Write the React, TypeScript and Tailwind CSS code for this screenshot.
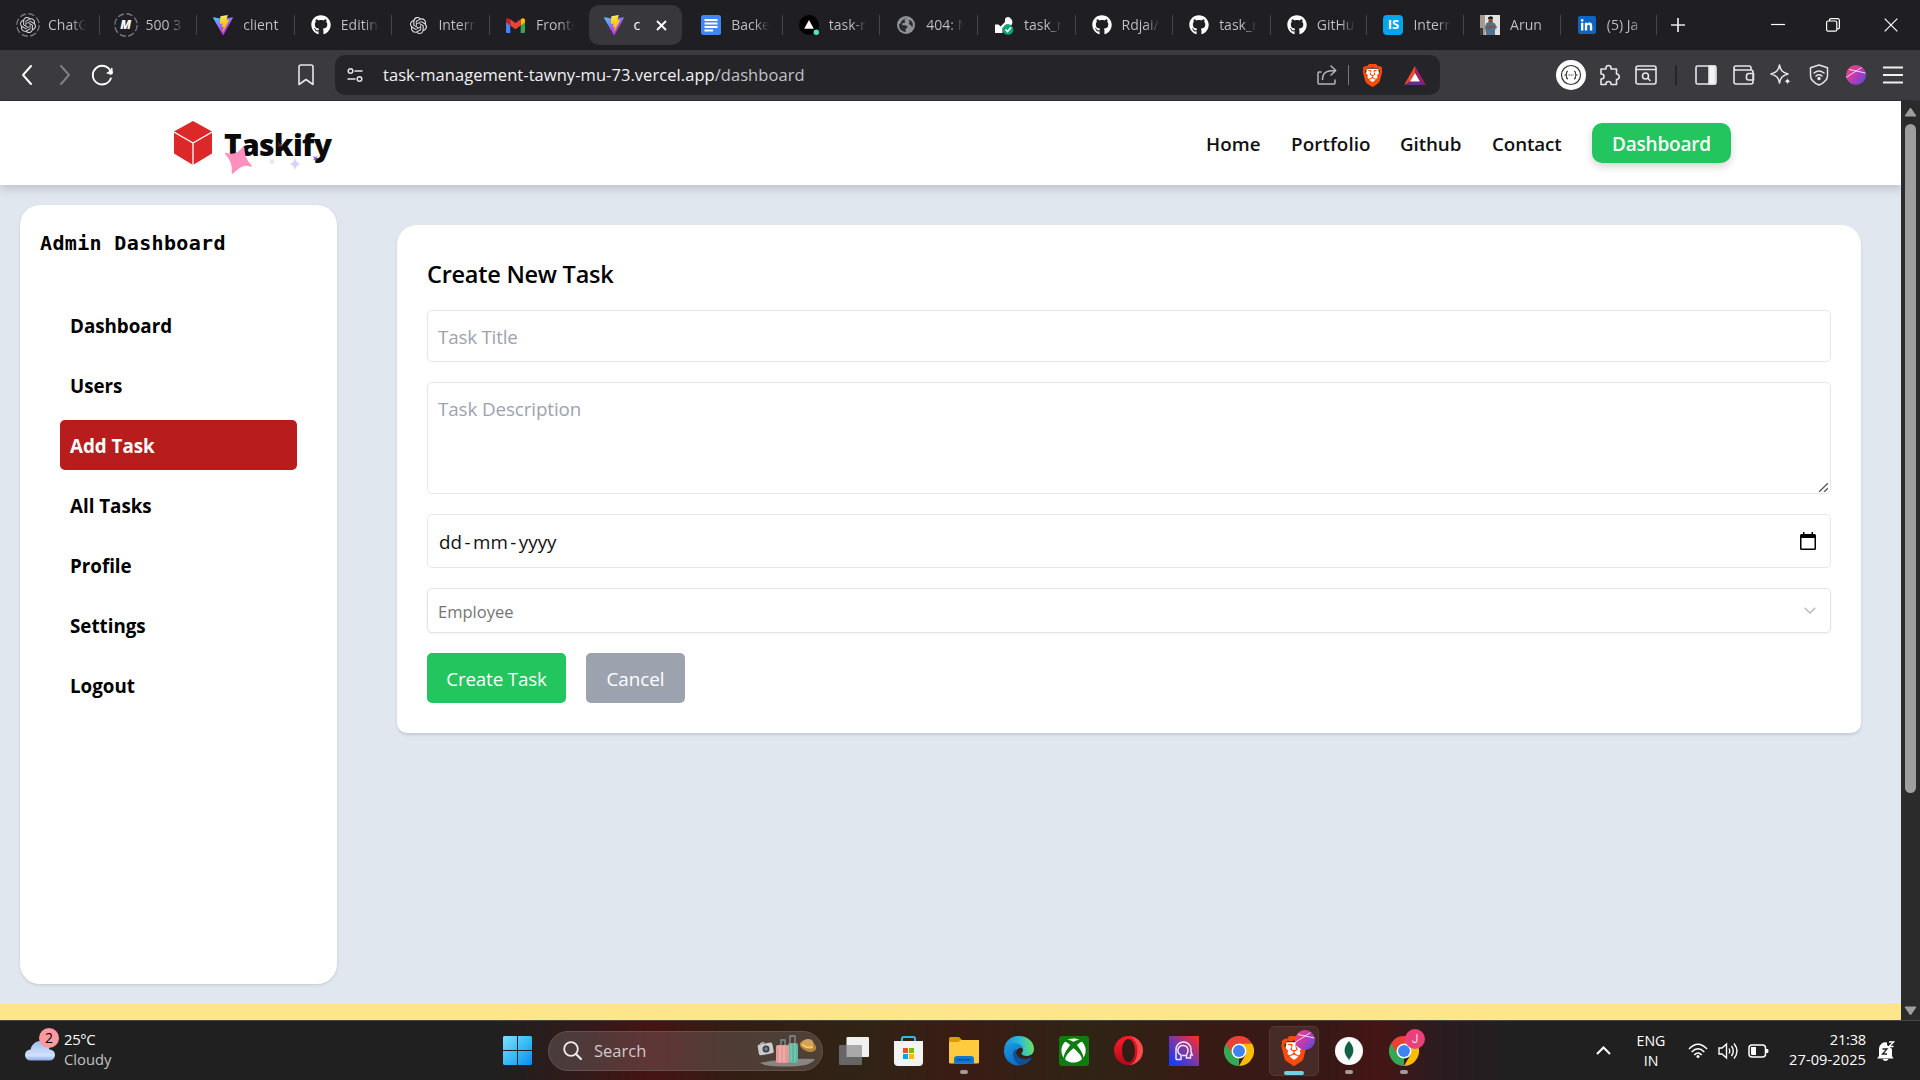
import React from "react";
import { FaGithub, FaXbox, FaLinkedinIn } from "react-icons/fa";
import { SiOpenai, SiBrave } from "react-icons/si";

function Vite() {
  return (
    <svg width="20" height="20" viewBox="0 0 256 257">
      <defs>
        <linearGradient id="va" x1="0" x2=".55" y1="0" y2=".8"><stop offset="0" stopColor="#41D1FF" /><stop offset="1" stopColor="#BD34FE" /></linearGradient>
        <linearGradient id="vb" x1=".4" x2=".5" y1="0" y2="1"><stop offset="0" stopColor="#FFEA83" /><stop offset=".2" stopColor="#FFDD35" /><stop offset="1" stopColor="#FFA800" /></linearGradient>
      </defs>
      <path fill="url(#va)" d="M255.153 37.938L134.897 252.976c-2.483 4.44-8.862 4.466-11.382.048L.875 37.958c-2.746-4.814 1.371-10.646 6.827-9.67l120.385 21.517a6.537 6.537 0 0 0 2.322-.004l117.867-21.483c5.438-.991 9.574 4.796 6.877 9.62Z" />
      <path fill="url(#vb)" d="M185.432.063L96.44 17.501a3.268 3.268 0 0 0-2.634 3.014l-5.474 92.456a3.268 3.268 0 0 0 3.997 3.378l24.777-5.718c2.318-.535 4.413 1.507 3.936 3.838l-7.361 36.047c-.495 2.426 1.782 4.5 4.151 3.78l15.304-4.649c2.372-.72 4.652 1.36 4.15 3.788l-11.698 56.621c-.732 3.542 3.979 5.473 5.943 2.437l1.313-2.028l72.516-144.72c1.215-2.423-.88-5.186-3.54-4.672l-25.505 4.922c-2.396.462-4.435-1.77-3.759-4.114l16.646-57.705c.677-2.35-1.37-4.583-3.769-4.113Z" />
    </svg>
  );
}

const Github = () => <FaGithub size={20} color="#fff" />;

function Sleeping({ children }: { children: React.ReactNode }) {
  return (
    <div className="relative flex h-6 w-6 items-center justify-center">
      <svg className="absolute inset-0" width="24" height="24" viewBox="0 0 24 24" fill="none">
        <circle cx="12" cy="12" r="11.2" stroke="#77767c" strokeWidth="1.4" strokeDasharray="6.4 2.4" />
      </svg>
      {children}
    </div>
  );
}

function Gmail() {
  return (
    <svg width="19" height="15" viewBox="0 0 19 15">
      <path fill="#4285f4" d="M0 2h4.3v13H1.3A1.3 1.3 0 0 1 0 13.700z" />
      <path fill="#34a853" d="M14.700 2H19v11.700A1.300 1.300 0 0 1 17.700 15h-3z" />
      <path fill="#fbbc04" d="M14.700 1.200 16.500.3Q19 0 19 2v2.200l-4.300 3.200z" />
      <path fill="#c5221f" d="M0 2Q0 0 2.300.3l2 .9v6.200L0 4.200z" />
      <path fill="#ea4335" d="M4.300 7.400V1.200L9.500 5.100l5.200-3.900v6.200L9.500 11.300z" />
    </svg>
  );
}

function Docs() {
  return (
    <svg width="20" height="20" viewBox="0 0 20 20"><rect width="20" height="20" rx="2.500" fill="#4285f4" /><path stroke="#fff" strokeWidth="2" d="M3.500 5h13M3.500 8.500h13M3.500 12h13M3.500 15.500h8.500" /></svg>
  );
}

function Vercel() {
  return (
    <svg width="20" height="20" viewBox="0 0 20 20"><circle cx="10" cy="10" r="10" fill="#000" /><path fill="#fff" d="m10 5 4.800 8.700H5.200z" /><circle cx="17.300" cy="17.300" r="2.700" fill="#50e3c2" /></svg>
  );
}

function Globe() {
  return (
    <svg width="18" height="18" viewBox="0 0 18 18"><circle cx="9" cy="9" r="9" fill="#8f9297" /><path fill="#2b2a2f" d="M10.500 2.300c-1 .3-2.700.6-3 1.800-.2 1 1.200 1.200.6 2.200-.7 1-2.600.4-3 1.600-.3.900.8 1.300 2.300 1.300 1.700.1 3.200.4 3.100 1.900-.1 1.200-1.800 1.300-2 2.500-.1.900.6 2 .3 2.400C4.600 15.700 2 12.600 2 9c0-.7.100-1 .2-1.500C3.500 8 4 7.300 4 6.500c0-1 .8-2 2-2.800C7.500 2.800 9 2 10.500 2.300zM11.500 4c1.300-.3 2.700.6 3.500 1.800.8 1.300 1.200 3.700.6 5-.7.200-1.300-.4-1.500-1.200-.3-1-1.600-.7-2-1.700-.5-1.300.8-1.600.4-2.400-.3-.6-1.600-.7-1-1.500z" /></svg>
  );
}

function Tool() {
  return (
    <svg width="20" height="20" viewBox="0 0 20 20">
      <path fill="#fff" d="M1 9.500h3.500l2 2L11 7V4a3.200 3.200 0 0 1 6 0c1.500 1 2 4 .5 6L12 9.500 8.500 13v5H1z" />
      <circle cx="14" cy="14.500" r="5.300" fill="#0ca678" />
      <path d="m11.500 14.500 2 2 3.500-4" stroke="#fff" strokeWidth="1.600" fill="none" />
    </svg>
  );
}

function Photo() {
  return (
    <svg width="20" height="20" viewBox="0 0 20 20">
      <path fill="#e4e2de" d="M0 0h20v20H0z" /><path fill="#a39b90" d="M0 0h5v20H0z" /><path fill="#3e3a36" d="M0 13h3v7H0z" />
      <path fill="#54718e" d="M6 8.500Q10 5 15 8.500l2 4-2 2v5.500H6l-1-8z" /><path fill="#7a5340" d="M8.500 2.500h4.200v4.500q-2 2-4.200 0zM6 12l8-1.500 1 1.500-8 2z" /><path fill="#191716" d="M8 2.800Q10.300-.2 13 2.500v1.200H8z" />
    </svg>
  );
}

const tabs: { label: string; icon: React.ReactNode; active?: boolean }[] = [
  { label: "ChatG", icon: <Sleeping><SiOpenai size={16} color="#d6d6d8" /></Sleeping> },
  { label: "500 3", icon: <Sleeping><span className="text-[12px] font-extrabold italic text-white">M</span></Sleeping> },
  { label: "client", icon: <Vite /> },
  { label: "Editin", icon: <Github /> },
  { label: "Intern", icon: <SiOpenai size={17} color="#e4e4e6" /> },
  { label: "Fronte", icon: <Gmail /> },
  { label: "c", icon: <Vite />, active: true },
  { label: "Backe", icon: <Docs /> },
  { label: "task-r", icon: <Vercel /> },
  { label: "404: N", icon: <Globe /> },
  { label: "task_r", icon: <Tool /> },
  { label: "Rdjai/", icon: <Github /> },
  { label: "task_r", icon: <Github /> },
  { label: "GitHu", icon: <Github /> },
  { label: "Intern", icon: <span className="flex h-5 w-5 items-center justify-center rounded-[4px] bg-[#00a5ec] text-[13px] font-bold text-white">IS</span> },
  { label: "Arun", icon: <Photo /> },
  { label: "(5) Ja", icon: <span className="flex h-[18px] w-[18px] items-center justify-center rounded-[2px] bg-[#0a66c2]"><FaLinkedinIn size={13} color="#fff" /></span> },
];

function TabStrip() {
  return (
    <div className="flex h-[50px] items-center bg-[#1f1e23] pl-[2px]">
      {tabs.map((t, i) => (
        <div key={i} className={"flex h-10 shrink-0 items-center " + (i >= 13 ? "w-[96.7px]" : "w-[97.6px]")}>
          <div className={"flex h-10 items-center " + (t.active ? "ml-px w-[93px] rounded-[10px] bg-[#38373c]" : "flex-1")}>
            <div className={"flex w-6 justify-center " + (t.active ? "ml-[13px]" : "ml-[14px]")}>{t.icon}</div>
            {t.active ? (
              <>
                <span className="ml-[8px] pb-[2px] text-[14px] text-white">c</span>
                <svg className="ml-[16px]" width="11" height="11" viewBox="0 0 11 11"><path d="m1 1 9 9m0-9-9 9" stroke="#fff" strokeWidth="1.900" /></svg>
              </>
            ) : (
              <div className={"ml-[8px] w-[38px] whitespace-nowrap bg-clip-text pb-[2px] text-[14px] text-transparent " + (t.label === "client" || t.label === "Arun" ? "bg-[#c3c3c6]" : "bg-[linear-gradient(90deg,#c3c3c6_62%,#1f1e23_100%)]")}>{t.label}</div>
            )}
          </div>
          <div className={"h-5 w-px " + (t.active || i === 5 ? "bg-transparent" : "bg-[#47464b]")} />
        </div>
      ))}
      <svg className="ml-[14px]" width="14" height="14" viewBox="0 0 14 14"><path d="M7 0v14M0 7h14" stroke="#e8e8ea" strokeWidth="1.700" /></svg>
      <div className="ml-auto flex h-full items-center">
        <svg className="mr-[41px]" width="14" height="14" viewBox="0 0 14 14"><path d="M0 6.500h14" stroke="#fff" strokeWidth="1.200" /></svg>
        <svg className="mr-[44px]" width="14" height="14" viewBox="0 0 14 14" fill="none" stroke="#fff" strokeWidth="1.200"><rect x=".6" y="3" width="10.200" height="10.200" rx="1.500" /><path d="M3.500 3V2A1.400 1.400 0 0 1 5 .7h6.500A1.900 1.900 0 0 1 13.400 2.500V9.500a1.400 1.400 0 0 1-1.400 1.400h-1" /></svg>
        <svg className="mr-[22px]" width="14" height="14" viewBox="0 0 14 14"><path d="m.7.7 12.600 12.600m0-12.600L.7 13.300" stroke="#fff" strokeWidth="1.200" /></svg>
      </div>
    </div>
  );
}

const lineIcon = { fill: "none", stroke: "#e6e6e8", strokeWidth: 1.6, strokeLinejoin: "round", strokeLinecap: "round" } as const;

function Cell({ w, children }: { w: number; children: React.ReactNode }) {
  return <div className="flex shrink-0 items-center justify-center" style={{ width: w }}>{children}</div>;
}

function Orb({ size }: { size: number }) {
  return (
    <svg width={size} height={size} viewBox="0 0 20 20">
      <defs><linearGradient id="orb" x1="0" x2="1" y1=".2" y2="1"><stop offset="0" stopColor="#f0427a" /><stop offset=".5" stopColor="#b53bb8" /><stop offset="1" stopColor="#4b4fe0" /></linearGradient></defs>
      <circle cx="10" cy="10" r="10" fill="url(#orb)" />
      <path d="M3 4.500 19.500 8M0 12.500 15.500 2.500" stroke="#f5d8f4" strokeWidth="1" />
    </svg>
  );
}

function BraveLion({ size }: { size: number }) {
  return (
    <svg width={size} height={size} viewBox="0 0 24 24">
      <path fill="#fff" d="M6 5h12l1 6-3 7-4 3-4-3-3-7z" />
      <SiBrave size={24} color="#ff4a0c" />
    </svg>
  );
}

function Toolbar() {
  return (
    <div className="flex h-[51px] items-center border-b border-[#2f2e36] bg-[#3b3a3f]">
      <div className="flex w-[335px] shrink-0 items-center pl-[21px]">
        <svg width="12" height="20" viewBox="0 0 12 20" {...lineIcon} stroke="#fff" strokeWidth="1.900"><path d="M10 1 2 10l8 9" /></svg>
        <svg className="ml-[26px]" width="12" height="20" viewBox="0 0 12 20" {...lineIcon} stroke="#818086" strokeWidth="1.900"><path d="m2 1 8 9-8 9" /></svg>
        <svg className="ml-[20px]" width="24" height="22" viewBox="0 0 24 22" {...lineIcon} stroke="#fff" strokeWidth="1.900"><path d="M19.800 14.500A9.300 9.300 0 1 1 19.500 7" /><circle cx="19.600" cy="8.500" r="2.300" fill="#fff" stroke="none" /><path d="M20.800 4.500v4.500h-4.500" strokeWidth="1.500" /></svg>
        <svg className="ml-auto mr-[21px]" width="16" height="22" viewBox="0 0 16 22" {...lineIcon}><path d="M1 3a2 2 0 0 1 2-2h10a2 2 0 0 1 2 2v17.500L8 15.500l-7 5z" /></svg>
      </div>
      <div className="flex h-10 w-[1105px] shrink-0 items-center rounded-[10px] bg-[#252429]">
        <svg className="ml-[12px]" width="16" height="16" viewBox="0 0 16 16" {...lineIcon} strokeWidth="1.500"><circle cx="3.500" cy="4" r="2.300" /><path d="M8 4h7M1 12h7" /><circle cx="12.500" cy="12" r="2.300" /></svg>
        <div className="ml-[20px] text-[16.500px] leading-6 tracking-[0.06px] text-[#f2f2f3]"><span>task-management-tawny-mu-73.vercel.app</span><span className="text-[#c2c2c6]">/dashboard</span></div>
        <div className="ml-auto flex items-center pr-[6px]">
          <svg className="mr-[11px]" width="20" height="20" viewBox="0 0 20 20" {...lineIcon} stroke="#b5b5ba" strokeWidth="1.500"><path d="M4 7H2a1 1 0 0 0-1 1v10a1 1 0 0 0 1 1h15a1 1 0 0 0 1-1v-3M5.500 14.500C5.500 8 9 5.500 18 5.500M14 1l4.800 4.500L14 10" /></svg>
          <div className="h-5 w-px bg-[#7a797f]" />
          <Cell w={47}><BraveLion size={23} /></Cell>
          <Cell w={38}><svg width="22" height="19" viewBox="0 0 22 19"><path fill="#ff4724" d="M11 0v7L6 15.500 0 19z" /><path fill="#9e1f63" d="M11 0v7l5.500 8.500L22 19z" /><path fill="#662d91" d="m0 19 6-3.500h10.500L22 19z" /><path fill="#fff" d="m11 7 5 8.500H6z" /></svg></Cell>
        </div>
      </div>
      <div className="ml-auto flex items-center pr-[8px]">
        <Cell w={40}><div className="flex h-[30px] w-[30px] items-center justify-center rounded-full bg-white"><svg width="22" height="22" viewBox="0 0 22 22" fill="none" stroke="#333" strokeWidth="1.200"><circle cx="11" cy="11" r="9.500" /><path d="M8 7q-1.500.2-1.400 1.800.2 1.800-1 2.200 1.200.4 1 2.200-.1 1.600 1.400 1.800M14 7q1.500.2 1.400 1.800-.2 1.800 1 2.200-1.200.4-1 2.200.1 1.600-1.400 1.800" /><path d="M8.500 11h5" strokeDasharray="1.200 .8" /></svg></div></Cell>
        <Cell w={37}><svg width="22" height="22" viewBox="0 0 22 22" {...lineIcon}><path d="M2 5h5V4a2.500 2.500 0 0 1 5 0v1h5.500v5H18a2.800 2.800 0 0 1 0 5.500h-.5V20.500H12V20a2.500 2.500 0 0 0-5 0v.5H2V15h.5a2.300 2.300 0 0 0 0-5H2z" /></svg></Cell>
        <Cell w={36}><svg width="22" height="20" viewBox="0 0 22 20" {...lineIcon}><rect x="1" y="1" width="20" height="18" rx="2" /><path d="M1 4.500h20" /><circle cx="10.500" cy="11" r="3" /><path d="m12.800 13.300 2.200 2.200" /></svg></Cell>
        <Cell w={23}><div className="h-5 w-[2px] bg-[#252429]" /></Cell>
        <Cell w={38}><svg width="22" height="20" viewBox="0 0 22 20" {...lineIcon}><rect x="1" y="1" width="20" height="18" rx="1.500" /><path d="M14 1h6v18h-6z" fill="#f4f4f5" /></svg></Cell>
        <Cell w={37}><svg width="22" height="20" viewBox="0 0 22 20" {...lineIcon}><path d="M18 5V3a2 2 0 0 0-2-2H3a2 2 0 0 0 0 4h15a2 2 0 0 1 2 2v10a2 2 0 0 1-2 2H3a2 2 0 0 1-2-2V3M20.500 8.500H16a2.500 2.500 0 0 0-2.500 2.500v2a2 2 0 0 0 2 2h5z" /></svg></Cell>
        <Cell w={38}><svg width="22" height="22" viewBox="0 0 22 22" {...lineIcon} strokeWidth="1.500"><path d="M9.500 1c1 5.500 3 7.500 8.500 9-5.500 1.500-7.500 3.500-8.500 9-1-5.500-3-7.500-8.500-9 5.500-1.500 7.500-3.500 8.500-9z" /><path d="M17.500 13.500c.5 2.500 1 3 3.500 3.800-2.500.7-3 1.200-3.500 3.700-.5-2.500-1-3-3.500-3.700 2.500-.8 3-1.300 3.500-3.800z" fill="#fff" stroke="#3b3a3f" strokeWidth=".5" /></svg></Cell>
        <Cell w={37}><svg width="20" height="22" viewBox="0 0 20 22" {...lineIcon} strokeWidth="1.500"><path d="m10 1 8.500 2.700v7.800q0 6-8.500 9.500-8.500-3.500-8.500-9.500V3.700zM5 9q5-4 10 0M7 12q3-2.500 6 0" /><circle cx="10" cy="14.500" r="1" fill="#fff" /></svg></Cell>
        <Cell w={37}><Orb size={20} /></Cell>
        <Cell w={38}><svg width="20" height="18" viewBox="0 0 20 18"><path d="M0 1.500h20M0 9h20M0 16.500h20" stroke="#f0f0f1" strokeWidth="1.800" /></svg></Cell>
      </div>
    </div>
  );
}

function Header() {
  return (
    <header className="relative z-10 flex h-[84px] shrink-0 items-center bg-white pl-[174px] shadow-[0_4px_9px_rgba(60,65,80,0.22)]">
      <svg className="-mt-px" width="38" height="44" viewBox="0 0 38 44"><path fill="#dc2828" d="M19 0 38 10.500v22L19 44 0 32.500v-22z" /><path d="M0 11 19 22l19-11M19 22v22" stroke="#fff" strokeWidth="1.300" fill="none" /></svg>
      <div className="relative ml-[12px]">
        <span className="block pt-[3px] text-[30px] font-extrabold leading-10 tracking-[-0.7px] text-[#0a0a0a]">Taskify</span>
        <svg className="absolute left-0 top-0" width="112" height="54" viewBox="0 0 112 54">
          <path fill="#ff8fbd" d="M19.500 25.500C20.300 33 20.500 37 27 44C20 41.500 15.500 44 8.500 51C9.500 43.500 7.500 38 1.700 31.500C9 33.500 14 32.500 19.500 25.500z" stroke="#ff8fbd" strokeWidth="1.500" strokeLinejoin="round" />
          <path fill="#d9d0fd" d="M71 36q1 4.800 5.500 6-4.500 1.200-5.500 6-1-4.800-5.500-6 4.500-1.200 5.500-6z" />
          <path fill="#e6defd" d="m45.500 36.500 2.500 1.500 2.500-1.500-1 2.700 1 2.800-2.500-1-2.500 1 1-2.800z" />
          <path fill="#6b4fd8" opacity=".75" d="m89 34 2.300 1 2.300-1-1 2.300 1 2.300-2.300-1-2.300 1 1-2.300z" />
          <path fill="#6e2b3d" opacity=".8" d="m53.500 20.500 2.500 1.300 2.500-1.300-1.200 2.500 1.200 2.500-2.500-1.300-2.500 1.300 1.200-2.500z" />
        </svg>
      </div>
      <nav className="ml-auto flex items-center gap-[30px] pr-[170px] text-[18.800px] font-semibold text-[#111]">
        <span className="w-[55px] pt-[2px] tracking-[0.1px]">Home</span>
        <span className="w-[79px] pt-[2px] tracking-[0.1px]">Portfolio</span>
        <span className="w-[62px] pt-[2px] tracking-[-0.1px]">Github</span>
        <span className="w-[70px] pt-[2px] tracking-[-0.1px]">Contact</span>
        <button className="flex h-10 w-[139px] items-center justify-center rounded-[10px] bg-[#22c55e] pt-[2px] text-[19px] tracking-[-0.2px] text-white shadow-[0_4px_8px_rgba(0,0,0,0.16)]">Dashboard</button>
      </nav>
    </header>
  );
}

const menu = ["Dashboard", "Users", "Add Task", "All Tasks", "Profile", "Settings", "Logout"];

function Sidebar() {
  return (
    <aside className="h-[779px] w-[317px] shrink-0 rounded-[20px] bg-white px-5 pt-[20px] shadow-[0_1px_3px_rgba(0,0,0,0.14)]">
      <h2 className="h-[75px] whitespace-nowrap pt-[3px] font-['DejaVu_Sans_Mono',monospace] text-[20px] font-bold leading-[30px] tracking-[0.35px] text-black">Admin Dashboard</h2>
      <ul className="flex flex-col gap-[10px] px-5">
        {menu.map((m) => (
          <li key={m} className={"flex h-[50px] items-center rounded-[5px] px-[10px] pt-[2px] text-[18.800px] font-bold tracking-[-0.02px] " + (m === "Add Task" ? "bg-[#b91c1c] text-white" : "text-black")}>{m}</li>
        ))}
      </ul>
    </aside>
  );
}

function TaskForm() {
  return (
    <section className="flex h-[508px] w-[1464px] flex-col gap-5 rounded-[20px] rounded-b-[10px] bg-white px-[30px] pt-[30px] shadow-[0_2px_3px_rgba(0,0,0,0.12)]">
      <h3 className="h-[35px] text-[23.500px] font-semibold leading-[38px] tracking-[-0.25px] text-black">Create New Task</h3>
      <div className="flex h-[52px] items-center rounded-[5px] border border-[#e5e7eb] px-[10px] pt-[2px] text-[18.800px] tracking-[-0.2px] text-[#9ca3af]">Task Title</div>
      <div className="relative h-[112px] rounded-[5px] border border-[#e5e7eb] px-[10px] pt-[11px] text-[18.800px] leading-[30px] tracking-[-0.1px] text-[#9ca3af]">
        Task Description
        <svg className="absolute bottom-[1px] right-[2px]" width="9" height="9" viewBox="0 0 9 9"><path d="M0 9 9 0M5 9l4-4" stroke="#555" strokeWidth="1.300" /></svg>
      </div>
      <div className="flex h-[54px] items-center justify-between rounded-[5px] border border-[#e5e7eb] pl-[11px] pr-[14px] text-[18.800px] text-[#111]">
        <span className="flex pt-[3px]"><span>dd</span><span className="mx-[2.500px]">-</span><span>mm</span><span className="mx-[2.500px]">-</span><span>yyyy</span></span>
        <svg width="16" height="18" viewBox="0 0 16 18"><path d="M0 3.500A1.500 1.500 0 0 1 1.500 2H3V0h1.500v2h7V0H13v2h1.500A1.500 1.500 0 0 1 16 3.500v13a1.500 1.500 0 0 1-1.500 1.500h-13A1.500 1.500 0 0 1 0 16.500zM1.500 6v10.500h13V6z" fill="#000" /></svg>
      </div>
      <div className="flex h-[45px] items-center justify-between rounded-[5px] border border-[#e2e4e8] pl-[10px] pr-[14px] text-[16.500px] text-[#757575] shadow-[0_1px_3px_rgba(0,0,0,0.06)]">
        <span className="pt-[3px]">Employee</span>
        <svg width="12" height="7" viewBox="0 0 12 7"><path d="m.7.7 5.300 5.300L11.300.7" fill="none" stroke="#b8b8b8" strokeWidth="1.400" /></svg>
      </div>
      <div className="flex gap-5 text-[18.800px] tracking-[-0.15px] text-white">
        <button className="h-[50px] w-[139px] rounded-[5px] bg-[#22c55e] pt-[2px]">Create Task</button>
        <button className="h-[50px] w-[99px] rounded-[5px] bg-[#9ca3af] pt-[2px] tracking-normal">Cancel</button>
      </div>
    </section>
  );
}

function Scrollbar() {
  return (
    <div className="flex w-[19px] shrink-0 flex-col items-center bg-[#2b2b2b] pt-[6px]">
      <svg width="13" height="10" viewBox="0 0 13 10"><path d="M6.500 1 12 9H1z" fill="#9f9f9f" stroke="#9f9f9f" strokeLinejoin="round" /></svg>
      <div className="mt-[7px] h-[669px] w-[11px] rounded-full bg-[#9f9f9f]" />
      <svg className="mb-[4px] mt-auto" width="13" height="10" viewBox="0 0 13 10"><path d="M6.500 9 12 1H1z" fill="#9f9f9f" stroke="#9f9f9f" strokeLinejoin="round" /></svg>
    </div>
  );
}

function Chrome() {
  return (
    <svg width="30" height="30" viewBox="0 0 48 48">
      <path fill="#34a853" d="M24 24V48A24 24 0 0 1 3.200 12z" />
      <path fill="#ea4335" d="M3.200 12A24 24 0 0 1 44.800 12H24A12 12 0 0 0 13.600 30z" />
      <path fill="#fbbc04" d="M24 12h20.800A24 24 0 0 1 24 48l10.400-18z" />
      <circle cx="24" cy="24" r="12" fill="#fff" /><circle cx="24" cy="24" r="9.500" fill="#3f82f1" />
    </svg>
  );
}

function Edge() {
  return (
    <svg width="30" height="30" viewBox="0 0 30 30">
      <defs>
        <linearGradient id="e1" x1="0" x2="1" y1=".4" y2=".3"><stop offset="0" stopColor="#1c8fd8" /><stop offset=".5" stopColor="#2bb8dc" /><stop offset="1" stopColor="#6fe35a" /></linearGradient>
        <linearGradient id="e2" x1="0" x2=".6" y1="0" y2="1"><stop offset="0" stopColor="#1b9ce2" /><stop offset="1" stopColor="#0c68c0" /></linearGradient>
      </defs>
      <path fill="url(#e1)" d="M0 13C1 5 7 0 15 0c9 0 15 6 15 13 0 5-4 7-7.500 7-3 0-5-1.200-5-2.300 0-1 1.500-1.500 1.500-4C19 10.500 15 8 11 8 5 8 1 11 0 13z" />
      <path fill="url(#e2)" d="M0 14c1-4 5-7 9.500-7 5 0 9 2.500 9.500 6-2-2-7-1-7 4 0 6 6 9 11 8.500-3 3-7 4.500-10 4C5 28.500-.5 22 0 14z" />
      <path fill="#124f96" d="M12 13c-3 2-3.500 5-2.500 8 1 4 4 7.500 8 8 4-.5 8-3 10-6.500.3-.6-.3-1-.8-.7-6 2.700-14 .2-14.700-5.300-.1-1.300 0-2.500 0-3.500z" />
    </svg>
  );
}

function TaskbarApp({ children, dot }: { children: React.ReactNode; dot?: boolean }) {
  return (
    <div className="relative flex h-full w-[55px] shrink-0 items-center justify-center">
      {children}
      {dot && <span className="absolute bottom-[6px] h-[4px] w-[8px] rounded-full bg-[#a39b98]" />}
    </div>
  );
}

function Luggage() {
  return (
    <svg width="60" height="32" viewBox="0 0 60 32">
      <path fill="#8a8482" d="M3 28q25-5 55-4-4 7-23 7.500Q10 32 3 28z" />
      <path d="M24 10V5h4v5M33 8V1h5v7" stroke="#8b8f98" fill="none" strokeWidth="1.300" />
      <rect x="31" y="8" width="10" height="20" rx="2" fill="#5fb59f" /><path d="M34 9v18M38 9v18" stroke="#83d5bf" />
      <rect x="19" y="10" width="13" height="18" rx="2" fill="#e59a98" /><path d="M23 11v16M27 11v16" stroke="#f4bdb8" />
      <rect x="1" y="8.500" width="15" height="11" rx="2" transform="rotate(-10 8 13)" fill="#c9cacc" /><path d="m3 8 4-1.500.5 2L3 9.500z" fill="#a9abb0" /><circle cx="9" cy="14" r="3.500" fill="#3c3f44" /><circle cx="9" cy="14" r="1.800" fill="#7c8188" />
      <ellipse cx="51" cy="11" rx="8.500" ry="5.500" transform="rotate(22 51 11)" fill="#b98345" /><ellipse cx="51" cy="8.500" rx="5.500" ry="4.500" fill="#d3a25e" /><path d="M45 9q4 5 11 3" stroke="#f7cf48" strokeWidth="2" fill="none" />
    </svg>
  );
}

function Taskbar() {
  return (
    <div className="flex h-[60px] items-center border-t border-[#4a4645] bg-[linear-gradient(90deg,#202020_0px,#202020_490px,#2f1b1b_570px,#461414_650px,#331d14_730px,#302415_860px,#3a1c14_960px,#2f2415_1090px,#381a15_1210px,#381815_1330px,#451515_1380px,#2a1c20_1440px,#202020_1520px)]">
      <div className="flex w-[490px] shrink-0 items-center pb-[3px] pl-[25px]">
        <div className="relative h-[38px] w-[34px]">
          <svg className="absolute left-0 top-[11px]" width="31" height="20" viewBox="0 0 31 20"><defs><linearGradient id="cl" x1="0" x2="0" y1="0" y2="1"><stop offset="0" stopColor="#9fbfee" /><stop offset=".75" stopColor="#d2e1fa" /><stop offset="1" stopColor="#86abea" /></linearGradient></defs><path fill="url(#cl)" d="M5.500 19.500a5.500 5.500 0 0 1 0-11C7 3 11 0 15 0q7 0 9.500 8.500a5.500 5.500 0 0 1 0 11z" /></svg>
          <span className="absolute -top-[2px] left-[14px] flex h-5 w-5 items-center justify-center rounded-full bg-[#ff99a0] text-[14px] leading-none text-black">2</span>
        </div>
        <div className="ml-[5px] text-[14.800px] leading-5 text-[#c2c2c2]"><div className="tracking-[-0.3px] text-white">25°C</div><div>Cloudy</div></div>
      </div>
      <TaskbarApp><svg width="29" height="29" viewBox="0 0 29 29"><defs><linearGradient id="w" x1="0" x2="1" y1="0" y2="1"><stop offset="0" stopColor="#81e1ff" /><stop offset=".5" stopColor="#3abcf7" /><stop offset="1" stopColor="#0b8bf2" /></linearGradient></defs><path fill="url(#w)" d="M1 0h13v14H0V1zM15 0h13l1 1v13H15zM0 15h14v14H1l-1-1zM15 15h14v13l-1 1H15z" /></svg></TaskbarApp>
      <div className="ml-[3px] flex h-10 w-[275px] shrink-0 items-center rounded-full border border-[#65504c] bg-[#ffffff24] pl-[14px] pr-[5px]">
        <svg width="19" height="19" viewBox="0 0 19 19" fill="none" stroke="#eee" strokeWidth="1.800"><circle cx="8" cy="8" r="6.800" /><path d="m13 13 5 5" strokeWidth="2.200" strokeLinecap="round" /></svg>
        <span className="ml-[12px] pt-px text-[16.500px] text-[#d2caca]">Search</span>
        <div className="ml-auto"><Luggage /></div>
      </div>
      <div className="ml-[3px] flex h-full">
        <TaskbarApp><svg width="30" height="28" viewBox="0 0 30 28"><rect x="7.500" width="22.500" height="20" rx="1" fill="#f0f0f0" /><rect y="8" width="23" height="20" rx="1" fill="#666" /><path d="M7.500 8H23v12H7.500z" fill="#a9a9a9" /></svg></TaskbarApp>
        <TaskbarApp><svg width="29" height="30" viewBox="0 0 29 30"><path d="M8 6V2.500Q8 1 9.500 1h10Q21 1 21 2.500V6" fill="none" stroke="#33b7ec" strokeWidth="2" /><path fill="#f3f3f3" d="M0 5h29v21a4 4 0 0 1-4 4H4a4 4 0 0 1-4-4z" /><path fill="#f25022" d="M9 12h5v5H9z" /><path fill="#7fba00" d="M15 12h5v5h-5z" /><path fill="#00a4ef" d="M9 18h5v5H9z" /><path fill="#ffb900" d="M15 18h5v5h-5z" /></svg></TaskbarApp>
        <TaskbarApp dot><svg width="30" height="27" viewBox="0 0 30 27"><path fill="#dc9b06" d="M0 1.500Q0 0 1.500 0H10l2.500 2.500V8H0z" /><path fill="#fecb3e" d="M0 6Q0 5 2 5h7l3-2h18v22q0 1.500-1.500 1.500h-27Q0 26.500 0 25z" /><path fill="#1278cf" d="M5 26.500V22q0-3 3-3h14q3 0 3 3v4.500z" /><path fill="#0b4f96" d="M8 22h14v1.500H8z" /></svg></TaskbarApp>
        <TaskbarApp><Edge /></TaskbarApp>
        <TaskbarApp><div className="flex h-[30px] w-[30px] items-center justify-center rounded-[3px] bg-[#107c10]"><FaXbox size={25} color="#fff" /></div></TaskbarApp>
        <TaskbarApp><svg width="29" height="29" viewBox="0 0 29 29"><defs><linearGradient id="op" x1="0" x2="0" y1="0" y2="1"><stop offset="0" stopColor="#ff1b2d" /><stop offset="1" stopColor="#b00a18" /></linearGradient></defs><path fill="#ff4b4b" d="M14.500 0a14.500 14.500 0 1 1 0 29z" /><path fill="url(#op)" d="M14.500 0c5 0 9 6.500 9 14.500S19.500 29 14.500 29a14.500 14.500 0 0 1 0-29z" /><ellipse cx="14.500" cy="14.500" rx="6.500" ry="11.500" fill="#321d16" /></svg></TaskbarApp>
        <TaskbarApp><div className="flex h-[30px] w-[30px] items-center justify-center bg-[linear-gradient(45deg,#1a3cf5_10%,#7a36a8_50%,#ff2a2a_95%)]"><svg width="20" height="20" viewBox="0 0 20 20" fill="none" stroke="#f0e6ff" strokeWidth="1.500"><path d="M2 18.500V9a7.500 7.500 0 0 1 15-1v3l1.300 3h-1.800v3h-4v-3.500M2 18.500h5v-4.500A5 5 0 1 1 14 9.500q0 2.500-1.500 4M8 14.500h4.500" /></svg></div></TaskbarApp>
        <TaskbarApp><Chrome /></TaskbarApp>
        <TaskbarApp>
          <div className="relative flex h-[50px] w-[50px] items-center justify-center rounded-[5px] border border-[#553733] bg-[#ffffff14]">
            <BraveLion size={30} />
            <span className="absolute right-[3px] top-[3px]"><Orb size={20} /></span>
            <span className="absolute bottom-0 h-[4px] w-5 rounded-full bg-[#6fd2dc]" />
          </div>
        </TaskbarApp>
        <TaskbarApp dot><svg width="28" height="28" viewBox="0 0 28 28"><circle cx="14" cy="14" r="14" fill="#fafafa" /><path fill="#116149" d="M14 4c5.500 6 6 12 .5 18L14 24l-.5-2C8 16 8.500 10 14 4z" /></svg></TaskbarApp>
        <TaskbarApp dot><Chrome /><span className="absolute left-[29px] top-[8px] flex h-5 w-5 items-center justify-center rounded-full bg-[#ec407a] font-['Roboto',sans-serif] text-[12px] text-[#ffd5e4]">J</span></TaskbarApp>
      </div>
      <div className="ml-auto flex shrink-0 items-center text-[14.200px] leading-5 text-white">
        <svg width="15" height="9" viewBox="0 0 15 9"><path d="m1 8 6.500-6.500L14 8" fill="none" stroke="#fff" strokeWidth="2" /></svg>
        <div className="ml-[20px] w-[40px] text-center">ENG<br />IN</div>
        <svg className="ml-[17px]" width="20" height="16" viewBox="0 0 20 16" fill="none" stroke="#fff" strokeWidth="1.500"><path d="M1 6q9-9.500 18 0M3.700 9q6.300-6.500 12.600 0M6.300 12q3.700-4 7.400 0" /><circle cx="10" cy="13.500" r="1.500" fill="#fff" stroke="none" /></svg>
        <svg className="ml-[10px]" width="21" height="18" viewBox="0 0 21 18" fill="none" stroke="#fff" strokeWidth="1.400"><path d="M1 6h3l4.500-4v14L4 12H1zM11 6.500q1.500 2.500 0 5M13.500 4q3.500 5 0 10M16 1.500q6 7.500 0 15" /></svg>
        <svg className="ml-[9px]" width="21" height="14" viewBox="0 0 21 14" fill="none"><rect x="1" y="1" width="16.500" height="12" rx="3" stroke="#fff" strokeWidth="1.500" /><path d="M3 3h5v8H4q-1 0-1-1zM18 5h1.500q1 0 1 2t-1 2H18z" fill="#fff" /></svg>
        <div className="ml-[17px] w-[80px] whitespace-nowrap pb-[3px] text-right text-[14.600px]"><div className="tracking-[-0.2px]">21:38</div><div className="flex justify-end tracking-[0.08px]">27-09-2025</div></div>
        <svg className="ml-[11px] mr-[25px]" width="18" height="20" viewBox="0 0 18 20"><path fill="#fff" d="M2 15V8a6.500 6.500 0 0 1 8-6.500V4l5 4v7l1.500 2.500H0zM5.500 18h6q-1 2-3 2t-3-2z" /><path d="M5.500 8h4.500l-4.500 5H10" stroke="#202020" strokeWidth="1.300" fill="none" /><path d="M12 1h4.500L12 5.500h4.500" stroke="#fff" strokeWidth="1.300" fill="none" /></svg>
      </div>
    </div>
  );
}

export default function App() {
  return (
    <div className="flex h-[1080px] w-[1920px] flex-col overflow-hidden font-['Open_Sans',sans-serif]">
      <TabStrip />
      <Toolbar />
      <div className="flex min-h-0 flex-1">
        <div className="flex w-[1901px] flex-col bg-[#e1e7ef]">
          <Header />
          <main className="flex flex-1 items-start pl-5 pt-5">
            <Sidebar />
            <div className="ml-[60px] mt-5"><TaskForm /></div>
          </main>
          <footer className="h-4 bg-[#fde58a]" />
        </div>
        <Scrollbar />
      </div>
      <Taskbar />
    </div>
  );
}
